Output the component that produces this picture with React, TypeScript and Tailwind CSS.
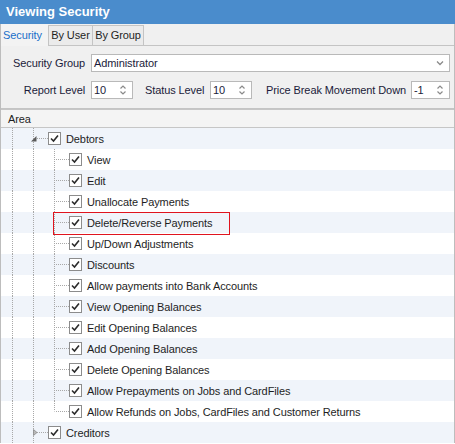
import React from 'react';

type RowKind = 'open' | 'closed' | 'child' | 'last';

const rows: { label: string; kind: RowKind; marked?: boolean }[] = [
  { label: 'Debtors', kind: 'open' },
  { label: 'View', kind: 'child' },
  { label: 'Edit', kind: 'child' },
  { label: 'Unallocate Payments', kind: 'child' },
  { label: 'Delete/Reverse Payments', kind: 'child', marked: true },
  { label: 'Up/Down Adjustments', kind: 'child' },
  { label: 'Discounts', kind: 'child' },
  { label: 'Allow payments into Bank Accounts', kind: 'child' },
  { label: 'View Opening Balances', kind: 'child' },
  { label: 'Edit Opening Balances', kind: 'child' },
  { label: 'Add Opening Balances', kind: 'child' },
  { label: 'Delete Opening Balances', kind: 'child' },
  { label: 'Allow Prepayments on Jobs and CardFiles', kind: 'child' },
  { label: 'Allow Refunds on Jobs, CardFiles and Customer Returns', kind: 'last' },
  { label: 'Creditors', kind: 'closed' },
];

const dot = { stroke: '#a8a8a8', strokeWidth: 1, strokeDasharray: '1 1' };

const Gutter: React.FC<{ kind: RowKind }> = ({ kind }) => {
  const parent = kind === 'open' || kind === 'closed';
  const w = parent ? 47 : 68;
  return (
    <svg width={w} height={21} className="shrink-0">
      <line x1={11.5} y1={0} x2={11.5} y2={21} {...dot} />
      <line x1={32.5} y1={0} x2={32.5} y2={21} {...dot} />
      {parent && <line x1={36} y1={10.5} x2={47} y2={10.5} {...dot} />}
      {kind === 'open' && <polygon points="35.5,8 35.5,13.5 30,13.5" fill="#5a5a5a" />}
      {kind === 'closed' && <polygon points="32.5,7.5 36,10.5 32.5,13.5" fill="#b8b8b8" stroke="#8a8a8a" strokeWidth={0.8} />}
      {kind === 'child' && <line x1={53.5} y1={0} x2={53.5} y2={21} {...dot} />}
      {kind === 'last' && <line x1={53.5} y1={0} x2={53.5} y2={10.5} {...dot} />}
      {!parent && <line x1={55} y1={10.5} x2={68} y2={10.5} {...dot} />}
    </svg>
  );
};

const CheckBox: React.FC = () => (
  <div className="w-[13px] h-[13px] shrink-0 border border-[#8c8c8c] bg-white flex items-center justify-center">
    <svg width={11} height={11} viewBox="0 0 11 11">
      <path d="M2 5.5 L4.5 8 L9 2.5" fill="none" stroke="#2b2b2b" strokeWidth={1.6} />
    </svg>
  </div>
);

const Spinner: React.FC<{ value: string; width: string }> = ({ value, width }) => (
  <div className={`${width} h-[18px] border border-[#b9b9b9] bg-white flex items-center`}>
    <span className="flex-1 pl-[2px] text-[#1b1b3a]">{value}</span>
    <svg width={14} height={14} viewBox="0 0 14 14" className="mr-[2px]">
      <path d="M4.5 5.5 L7 3 L9.5 5.5" fill="none" stroke="#8a8a8a" strokeWidth={1.2} />
      <path d="M4.5 8.5 L7 11 L9.5 8.5" fill="none" stroke="#8a8a8a" strokeWidth={1.2} />
    </svg>
  </div>
);

const App: React.FC = () => {
  return (
    <div className="w-[455px] h-[444px] overflow-hidden bg-white font-['Liberation_Sans',Arial,sans-serif] text-[11px] tracking-[-0.1px] text-[#1e1e1e]">
      <div className="h-[24px] bg-[#4a8ccc] flex items-center pl-[6px] text-white font-bold text-[13px] tracking-normal">
        Viewing Security
      </div>

      <div className="border-l border-r border-[#bdbdbd] bg-[#f0f0f0]">
        <div className="h-[22px] flex items-end border-b border-[#c4c4c4]">
          <div className="h-[22px] w-[47px] -mb-px bg-[#f3f3f3] flex items-center pl-[2px] text-[#1a6fc9]">
            Security
          </div>
          <div className="h-[20px] w-[45px] bg-[#ebebeb] border border-b-0 border-[#c4c4c4] flex items-center justify-center">
            By User
          </div>
          <div className="h-[20px] w-[51px] bg-[#ebebeb] border border-b-0 border-l-0 border-[#c4c4c4] flex items-center justify-center">
            By Group
          </div>
        </div>

        <div className="h-[63px] pt-[8px] pr-[4px] border-b border-[#c4c4c4] text-[#1b1b3a]">
          <div className="flex items-center">
            <span className="w-[85px] pr-[1px] text-right">Security Group</span>
            <div className="ml-[5px] flex-1 h-[18px] border border-[#b9b9b9] bg-white flex items-center pl-[2px]">
              <span className="flex-1">Administrator</span>
              <svg width={12} height={12} viewBox="0 0 12 12" className="mr-[3px]">
                <path d="M3 4.5 L6 7.5 L9 4.5" fill="none" stroke="#8a8a8a" strokeWidth={1.3} />
              </svg>
            </div>
          </div>
          <div className="flex items-center mt-[9px]">
            <span className="w-[85px] pr-[1px] text-right">Report Level</span>
            <div className="ml-[5px]">
              <Spinner value="10" width="w-[42px]" />
            </div>
            <span className="ml-[12px] w-[65px]">Status Level</span>
            <Spinner value="10" width="w-[42px]" />
            <span className="flex-1 text-right pr-[5px]">Price Break Movement Down</span>
            <Spinner value="-1" width="w-[39px]" />
          </div>
        </div>
      </div>

      <div className="border-l border-r border-[#bdbdbd]">
        <div className="h-[19px] bg-[#f4f4f4] border-t border-b border-[#c6c6c6] flex items-center pl-[7px] pt-[1px]">
          Area
        </div>
        {rows.map((row, i) => (
          <div
            key={row.label}
            className={`relative h-[21px] flex items-center ${i % 2 === 0 ? 'bg-[#f0f4fa]' : 'bg-white'}`}
          >
            <Gutter kind={row.kind} />
            <CheckBox />
            <span className="ml-[5px] pt-[1px] whitespace-nowrap">{row.label}</span>
            {row.marked && (
              <div className="absolute left-[52px] top-0 w-[177px] h-[23px] border border-[#e0141e] z-10" />
            )}
          </div>
        ))}
      </div>
    </div>
  );
};

export default App;
